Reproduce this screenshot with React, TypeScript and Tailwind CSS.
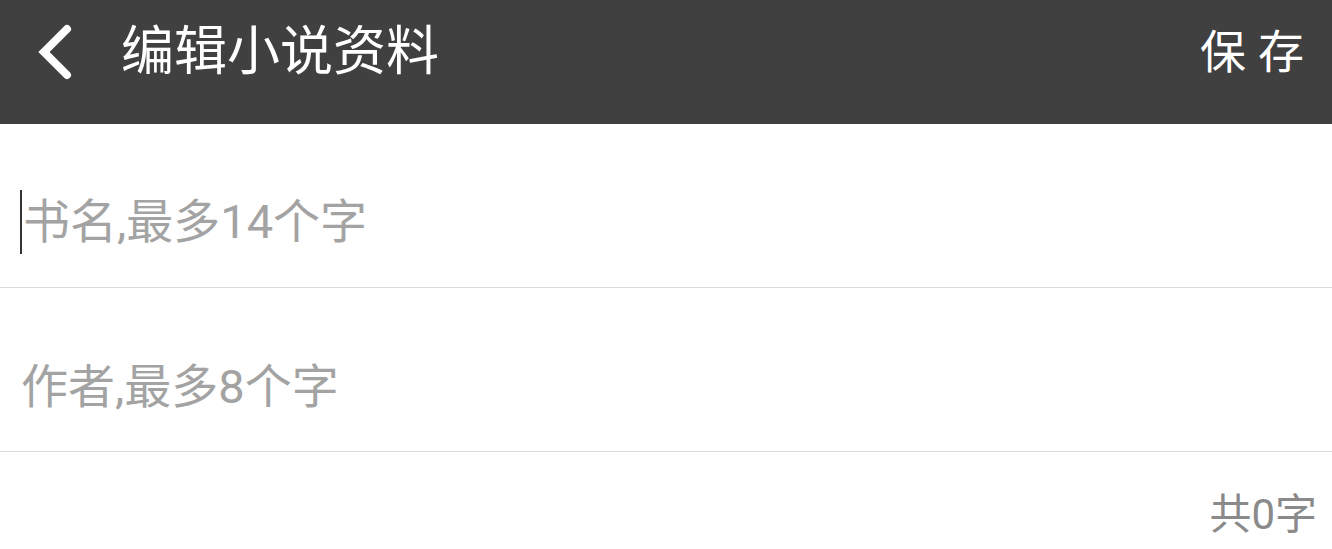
import React from 'react';

const font = { fontFamily: '"Roboto", "Noto Sans CJK SC", sans-serif' };

const BackIcon = () => (
  <svg width="40" height="56" viewBox="0 0 40 56" fill="none">
    <path d="M32 5 L9 28 L32 51" stroke="#ffffff" strokeWidth="8" strokeLinecap="round" strokeLinejoin="miter" />
  </svg>
);

export default function App() {
  return (
    <div className="w-[1332px] h-[549px] bg-white overflow-hidden" style={font}>
      {/* title bar */}
      <div className="h-[124px] bg-[#404040] flex items-center pb-[20px] pl-[35px] pr-[28px]">
        <BackIcon />
        <span className="ml-[46px] text-[53px] leading-none text-white">编辑小说资料</span>
        <div className="ml-auto flex gap-[12px] text-[46px] leading-none text-white">
          <span>保</span>
          <span>存</span>
        </div>
      </div>

      {/* book name */}
      <div className="h-[164px] border-b border-[#dcdcdc] flex items-center pt-[32px] pl-[20px]">
        <span className="w-[2px] h-[64px] bg-[#333333]" />
        <span className="ml-[1px] text-[47px] leading-none text-[#a3a3a3]">书名,最多14个字</span>
      </div>

      {/* author */}
      <div className="h-[164px] border-b border-[#dcdcdc] flex items-center pt-[34px] pl-[21px]">
        <span className="text-[47px] leading-none text-[#a3a3a3]">作者,最多8个字</span>
      </div>

      {/* counter */}
      <div className="flex justify-end pt-[42px] pr-[15px]">
        <span className="text-[42px] leading-none text-[#8a8a8a]">共0字</span>
      </div>
    </div>
  );
}
